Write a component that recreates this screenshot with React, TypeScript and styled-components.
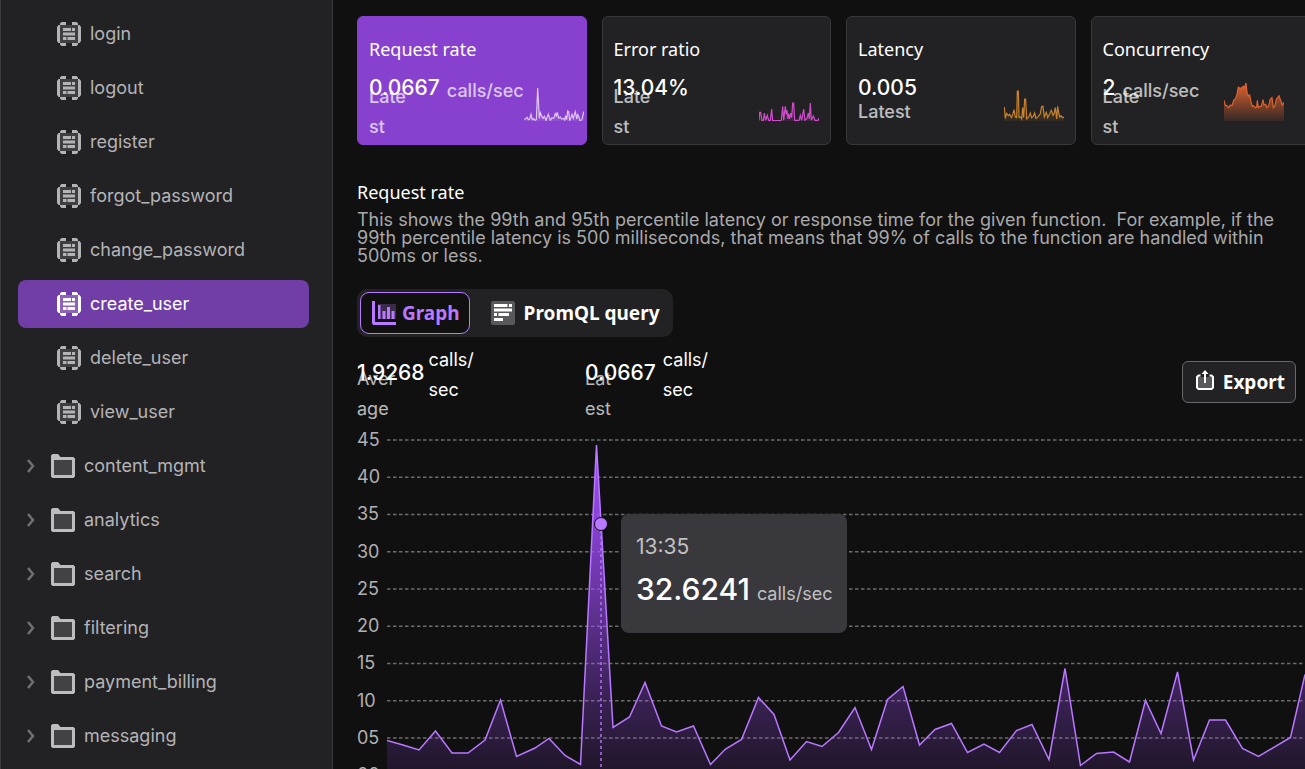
import React from "react";
import styled, { createGlobalStyle } from "styled-components";

const GlobalStyle = createGlobalStyle`
  *, *::before, *::after { box-sizing: border-box; }
  body {
    margin: 0;
    background: #101010;
    color: #ffffff;
    font-family: Inter, "Liberation Sans", sans-serif;
    font-size: 18px;
  }
  h2, p, ul { margin: 0; padding: 0; }
`;

const headingFont = `"Noto Sans", "Open Sans", sans-serif`;

const Shell = styled.div`
  display: flex;
  height: 100vh;
  overflow: hidden;
`;

const Sidebar = styled.nav`
  flex: none;
  width: 333px;
  padding: 10px 23px 0 17px;
  overflow: hidden;
  background: #222224;
  border-left: 1px solid #3c3c3e;
  border-right: 1px solid #38383c;
`;

const NavList = styled.ul`
  display: flex;
  flex-direction: column;
  gap: 6px;
  list-style: none;
`;

const NavLink = styled.a<{ $active?: boolean; $nested?: boolean }>`
  display: flex;
  align-items: center;
  gap: 9px;
  height: 48px;
  padding-left: ${(p) => (p.$nested ? 39 : 8)}px;
  border-radius: 8px;
  background: ${(p) => (p.$active ? "#713ea8" : "transparent")};
  color: ${(p) => (p.$active ? "#ffffff" : "#b4b4b7")};
  line-height: 22px;
  text-decoration: none;
  svg { flex: none; }
`;

const FolderLabel = styled.span`
  display: flex;
  align-items: center;
  gap: 15px;
`;

const Main = styled.main`
  flex: 1;
  min-width: 0;
  padding: 16px 0 0 24px;
  overflow: hidden;
`;

const Cards = styled.div`
  display: grid;
  grid-template-columns: repeat(4, minmax(0, 1fr));
  gap: 15px;
  margin-right: -15px;
`;

const Card = styled.button<{ $selected?: boolean }>`
  display: flex;
  flex-direction: column;
  gap: 15px;
  height: 129px;
  padding: 20px 11px 0;
  border: 1px solid ${(p) => (p.$selected ? "#8841cf" : "#38383b")};
  border-radius: 6px;
  background: ${(p) => (p.$selected ? "#8841cf" : "#222224")};
  color: #ffffff;
  font-family: inherit;
  font-size: 18px;
  text-align: left;
`;

const CardTitle = styled.span`
  font-family: ${headingFont};
  font-weight: 400;
  line-height: 24px;
`;

const CardBody = styled.span<{ $inset?: number }>`
  display: flex;
  justify-content: space-between;
  align-self: stretch;
  padding-right: ${(p) => p.$inset ?? 0}px;
`;

const ValueRow = styled.span<{ $gap: number }>`
  display: flex;
  gap: ${(p) => p.$gap}px;
  height: 24px;
`;

const Value = styled.span`
  font-size: 21px;
  font-weight: 500;
  line-height: 24px;
`;

const Unit = styled.span<{ $muted?: boolean }>`
  display: flex;
  align-items: center;
  height: ${(p) => (p.$muted ? 30 : 28)}px;
  line-height: 30px;
  white-space: pre;
  opacity: ${(p) => (p.$muted ? 0.7 : 1)};
  font-weight: ${(p) => (p.$muted ? 500 : 400)};
`;

const Label = styled.span<{ $height: number; $medium?: boolean }>`
  display: flex;
  align-items: center;
  height: ${(p) => p.$height}px;
  line-height: 30px;
  white-space: pre;
  opacity: 0.7;
  font-weight: ${(p) => (p.$medium ? 500 : 400)};
`;

const SparkSvg = styled.svg`
  flex: none;
  width: 60px;
  height: 40px;
  margin-top: 5px;
`;

const Heading = styled.h2`
  margin-top: 35px;
  font-family: ${headingFont};
  font-size: 18px;
  font-weight: 400;
  line-height: 24px;
`;

const Description = styled.p`
  margin-top: 7px;
  padding-right: 24px;
  color: #a9a9ab;
  line-height: 18px;
  white-space: pre-wrap;
`;

const Tabs = styled.div`
  display: inline-flex;
  margin-top: 24px;
  padding: 3px;
  border-radius: 10px;
  background: #222224;
`;

const Tab = styled.button<{ $active?: boolean }>`
  display: flex;
  align-items: center;
  gap: ${(p) => (p.$active ? 6 : 9)}px;
  height: 42px;
  padding: 0 9px 0 11px;
  margin-left: ${(p) => (p.$active ? 0 : 9)}px;
  border: 1px solid ${(p) => (p.$active ? "#b878ff" : "transparent")};
  border-radius: 9px;
  background: ${(p) => (p.$active ? "#101010" : "transparent")};
  color: ${(p) => (p.$active ? "#b878ff" : "#ffffff")};
  font-family: ${headingFont};
  font-size: 19px;
  font-weight: 700;
`;

const StatsRow = styled.div`
  display: flex;
  justify-content: space-between;
  margin-top: 24px;
  padding-right: 9px;
`;

const StatGroup = styled.div`
  display: flex;
`;

const Stat = styled.div`
  width: 228px;
`;

const ExportButton = styled.button`
  display: flex;
  align-items: center;
  gap: 9px;
  height: 42px;
  padding: 0 10px 0 13px;
  border: 1px solid #68686b;
  border-radius: 6px;
  background: #222224;
  color: #ffffff;
  font-family: ${headingFont};
  font-size: 19px;
  font-weight: 700;
`;

const Chart = styled.div`
  display: flex;
  height: 365px;
  margin-top: 21px;
`;

const Axis = styled.div`
  flex: none;
  display: flex;
  flex-direction: column;
  justify-content: space-between;
  width: 30px;
  margin-bottom: -1px;
  padding-top: 1px;
  color: #b0b0b3;
  line-height: 30px;
`;

const Plot = styled.div`
  position: relative;
  flex: 1;
  svg { display: block; width: 100%; height: 365px; }
`;

const Tooltip = styled.div`
  position: absolute;
  left: 234px;
  top: 90px;
  height: 119px;
  padding: 18px 15px;
  border-radius: 8px;
  background: #39383d;
  white-space: nowrap;
`;

const TooltipTime = styled.div`
  color: #c0c0c3;
  font-size: 21px;
  line-height: 30px;
`;

const TooltipValue = styled.div`
  margin-top: 8px;
  font-size: 30px;
  font-weight: 500;
  line-height: 38px;
  span {
    margin-left: 7px;
    color: #c0c0c3;
    font-size: 18px;
    font-weight: 400;
  }
`;

const FunctionIcon = () => (
  <svg width="24" height="24" viewBox="0 0 24 24" fill="currentColor" aria-hidden="true">
    <path opacity="0.2" d="M3 3h18v18H3z" />
    <path d="M9 0H4.500L3 1.500V3H1.500L0 5v14l1.500 2H3v1.500L4.500 24H9v-3H3V3h6zM15 0h4.500L21 1.500V3h1.500L24 5v14l-1.500 2H21v1.500L19.500 24H15v-3h6V3h-6z" />
    <path d="M6 6h8v3H6zM15 6h3v3h-3zM6 10.500h12v3H6zM6 15h3.500v3H6zM10.500 15H18v3h-7.500z" />
  </svg>
);

const FolderIcon = () => (
  <svg width="24" height="24" viewBox="0 0 24 24" aria-hidden="true">
    <path d="M1.500 0H7l2.500 3H22.500L24 4.500v18L22.500 24h-21L0 22.500v-21z" fill="#bdbdc0" />
    <path d="M3 6h18v15H3z" fill="#424244" />
  </svg>
);

const Chevron = () => (
  <svg width="10" height="14" viewBox="0 0 10 14" fill="none" aria-hidden="true">
    <path d="M2 1l5 6-5 6" stroke="#707073" strokeWidth="2.500" />
  </svg>
);

const GraphIcon = () => (
  <svg width="24" height="24" viewBox="0 0 24 24" fill="currentColor" aria-hidden="true">
    <path opacity="0.25" d="M6 3h18v15H6z" />
    <path d="M0 0h3v21h21v3H1.500L0 22.500zM6 4h2.500v14H6zM10.500 10h3v8h-3zM15 6h3v12h-3zM19.500 10h3v8h-3z" />
  </svg>
);

const QueryIcon = () => (
  <svg width="24" height="24" viewBox="0 0 24 24" fill="currentColor" aria-hidden="true">
    <rect opacity="0.25" width="24" height="24" rx="2" />
    <path d="M3 3h13.500v3H3zM18 3h3v3h-3zM3 7.500h18v3H3zM3 12h3v3H3zM7.500 12H18v3H7.500zM3 17h9v3H3z" />
  </svg>
);

const ExportIcon = () => (
  <svg width="18" height="24" viewBox="0 0 18 24" fill="none" aria-hidden="true">
    <path d="M2 7h14v11H2z" fill="#59595c" />
    <path d="M4.500 5.500H2.500L1 7v10.500L2.500 19h13l1.500-1.500V7l-1.500-1.500h-2" stroke="currentColor" strokeWidth="2" strokeLinejoin="round" />
    <path d="M9 13V2.500" stroke="currentColor" strokeWidth="2" />
    <path d="M5.500 4L9 0l3.500 4z" fill="currentColor" />
  </svg>
);

const functions = ["login", "logout", "register", "forgot_password", "change_password", "create_user", "delete_user", "view_user"];
const folders = ["content_mgmt", "analytics", "search", "filtering", "payment_billing", "messaging"];

interface Metric {
  title: string;
  value: string;
  unit?: string;
  label: string;
  color: string;
  fill: number;
  inset?: number;
  points: string;
}

const metrics: Metric[] = [
  {
    title: "Request rate", value: "0.0667", unit: "calls/sec", label: "Late\nst", color: "#e2c8f8", fill: 0.2,
    points: "0,114 5,114 9,109 13,116 17,114 21,100 25,116 29,113 33,118 37,116 41,21 46,112 49,95 53,105 57,112 61,106 66,118 73,100 79,118 84,110 89,112 94,98 97,105 100,94 104,111 109,108 113,114 118,112 122,117 125,104 128,116 131,90 134,92 137,118 141,110 144,100 148,112 151,100 154,92 158,114 161,101 165,108 168,119 172,117 175,112 179,92",
  },
  {
    title: "Error ratio", value: "13.04%", label: "Late\nst", color: "#d44bd0", fill: 0.3,
    points: "0,118 2,94 5,94 9,118 13,118 16,96 20,118 25,103 29,118 34,118 38,84 41,118 60,119 67,118 71,76 74,118 79,76 82,100 84,88 87,114 89,98 92,114 95,96 98,110 101,66 104,66 107,118 120,118 124,103 128,118 134,84 138,118 144,112 148,96 151,114 154,66 157,118 163,105 168,118 177,118 180,111",
  },
  {
    title: "Latency", value: "0.005", label: "Latest", color: "#c9842d", fill: 0.25,
    points: "1,78 4,112 8,97 13,104 17,100 22,110 27,98 30,86 34,108 38,110 40,30 43,30 45,109 50,108 53,114 56,80 59,110 62,54 65,54 68,114 74,108 79,96 83,110 88,106 92,96 96,112 103,106 109,98 113,76 117,76 121,108 127,94 131,110 137,98 142,88 147,103 150,98 154,80 158,114 161,76 164,96 167,108 171,104 175,110 180,108",
  },
  {
    title: "Concurrency", value: "2", unit: "calls/sec", label: "Late\nst", color: "#e0632f", fill: 1, inset: 24,
    points: "0,58 4,72 9,74 14,80 19,72 24,74 29,58 34,54 39,40 43,18 48,22 53,20 58,16 62,20 66,6 69,34 73,45 77,42 81,62 85,76 89,74 94,80 98,78 100,58 103,80 108,76 112,76 117,56 120,72 125,70 129,80 134,74 139,54 144,50 148,80 153,74 157,54 161,50 165,44 170,58 175,72 180,64",
  },
];

const Sparkline = ({ metric, id }: { metric: Metric; id: string }) => (
  <SparkSvg viewBox="0 0 180 120" aria-hidden="true">
    <defs>
      <linearGradient id={id} x1="0" y1="0" x2="0" y2="1">
        <stop offset="0" stopColor={metric.color} stopOpacity={metric.fill} />
        <stop offset="1" stopColor={metric.color} stopOpacity="0.1" />
      </linearGradient>
    </defs>
    <polygon points={`0,120 ${metric.points} 180,120`} fill={`url(#${id})`} />
    <polyline points={metric.points} fill="none" stroke={metric.color} strokeWidth="3.500" />
  </SparkSvg>
);

const series = [
  [0, 316.500], [16, 321], [32, 326], [48.500, 307], [65, 329], [81, 329], [98, 316], [113.500, 276], [129.500, 332.500],
  [148, 324], [162, 314.500], [178, 331.500], [193.500, 340.500], [209.500, 21], [226, 303.500], [242.500, 293], [258, 258.500],
  [274.500, 302], [289.500, 308], [306.500, 302], [323.500, 340.500], [338.500, 325], [354.500, 315.500], [371.500, 273.500], [387, 290.500],
  [403, 336], [419.500, 317.500], [435, 322.500], [451.500, 308.500], [468, 283.500], [484.500, 325.500], [500.500, 275.500], [516, 262.500],
  [532.500, 321], [548, 305.500], [564.500, 299.500], [580.500, 328.500], [597, 320], [612.500, 328.500], [629.500, 306.500], [645, 300.500],
  [662, 335.500], [678, 244.500], [693.500, 341.500], [709.500, 329.500], [726.500, 328], [742.500, 338], [758.500, 276.500], [774, 309.500],
  [790.500, 248], [806.500, 336], [822.500, 296], [838.500, 296], [855.500, 324.500], [871.500, 332.500], [903.500, 313.500], [918, 250.500],
];
const ticks = ["45", "40", "35", "30", "25", "20", "15", "10", "05", "00"];

const App = () => {
  const line = series.map((p) => p.join(",")).join(" ");
  return (
    <>
      <GlobalStyle />
      <Shell>
        <Sidebar>
          <NavList>
            {functions.map((name) => (
              <li key={name}>
                <NavLink href={`#${name}`} $nested $active={name === "create_user"}>
                  <FunctionIcon />
                  {name}
                </NavLink>
              </li>
            ))}
            {folders.map((name) => (
              <li key={name}>
                <NavLink href={`#${name}`}>
                  <FolderLabel>
                    <Chevron />
                    <FolderIcon />
                  </FolderLabel>
                  {name}
                </NavLink>
              </li>
            ))}
          </NavList>
        </Sidebar>
        <Main>
          <Cards>
            {metrics.map((m, i) => (
              <Card key={m.title} type="button" $selected={i === 0}>
                <CardTitle>{m.title}</CardTitle>
                <CardBody $inset={m.inset}>
                  <span>
                    <ValueRow $gap={7}>
                      <Value>{m.value}</Value>
                      {m.unit && <Unit $muted>{m.unit}</Unit>}
                    </ValueRow>
                    <Label $height={24} $medium>{m.label}</Label>
                  </span>
                  <Sparkline metric={m} id={`spark-${i}`} />
                </CardBody>
              </Card>
            ))}
          </Cards>
          <Heading>Request rate</Heading>
          <Description>
            {"This shows the 99th and 95th percentile latency or response time for the given function.  For example, if the 99th percentile latency is 500 milliseconds, that means that 99% of calls to the function are handled within 500ms or less."}
          </Description>
          <Tabs role="tablist">
            <Tab type="button" role="tab" aria-selected="true" $active>
              <GraphIcon />
              Graph
            </Tab>
            <Tab type="button" role="tab" aria-selected="false">
              <QueryIcon />
              PromQL query
            </Tab>
          </Tabs>
          <StatsRow>
            <StatGroup>
              <Stat>
                <ValueRow $gap={4}>
                  <Value>1.9268</Value>
                  <Unit>{"calls/\nsec"}</Unit>
                </ValueRow>
                <Label $height={18}>{"Aver\nage"}</Label>
              </Stat>
              <Stat>
                <ValueRow $gap={7}>
                  <Value>0.0667</Value>
                  <Unit>{"calls/\nsec"}</Unit>
                </ValueRow>
                <Label $height={18}>{"Lat\nest"}</Label>
              </Stat>
            </StatGroup>
            <ExportButton type="button">
              <ExportIcon />
              Export
            </ExportButton>
          </StatsRow>
          <Chart>
            <Axis>
              {ticks.map((t) => (
                <span key={t}>{t}</span>
              ))}
            </Axis>
            <Plot>
              <svg viewBox="0 0 918 365" preserveAspectRatio="none" role="img" aria-label="Request rate over time">
                <defs>
                  <linearGradient id="area" gradientUnits="userSpaceOnUse" x1="0" y1="21" x2="0" y2="350">
                    <stop offset="0" stopColor="#a24dff" stopOpacity="1" />
                    <stop offset="0.25" stopColor="#a24dff" stopOpacity="0.8" />
                    <stop offset="0.75" stopColor="#a24dff" stopOpacity="0.3" />
                    <stop offset="1" stopColor="#a24dff" stopOpacity="0.1" />
                  </linearGradient>
                </defs>
                {ticks.map((t, i) => (
                  <line key={t} x1="0" x2="918" y1={16 + i * 37.25} y2={16 + i * 37.25} stroke="#6c6c6e" strokeWidth="1.500" strokeDasharray="3.500 2.500" />
                ))}
                <polygon points={`0,365 ${line} 918,365`} fill="url(#area)" />
                <polyline points={line} fill="none" stroke="#b878ff" strokeWidth="1.500" />
                <line x1="214" x2="214" y1="106" y2="365" stroke="#b878ff" strokeOpacity="0.7" strokeWidth="2" strokeDasharray="3 3" />
                <circle cx="214" cy="100" r="6.500" fill="#b878ff" stroke="#101010" strokeWidth="1" />
              </svg>
              <Tooltip role="tooltip">
                <TooltipTime>13:35</TooltipTime>
                <TooltipValue>
                  32.6241<span>calls/sec</span>
                </TooltipValue>
              </Tooltip>
            </Plot>
          </Chart>
        </Main>
      </Shell>
    </>
  );
};

export default App;
